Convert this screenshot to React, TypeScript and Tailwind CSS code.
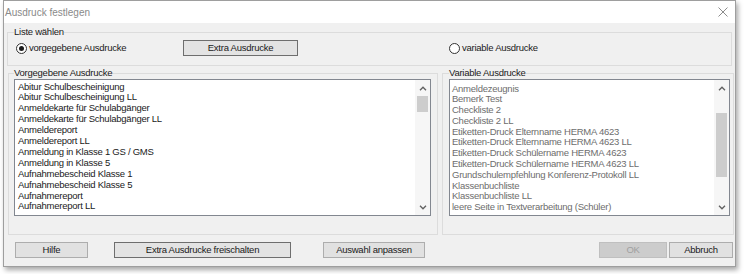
import React from "react";

const leftItems = [
  "Abitur Schulbescheinigung",
  "Abitur Schulbescheinigung LL",
  "Anmeldekarte für Schulabgänger",
  "Anmeldekarte für Schulabgänger LL",
  "Anmeldereport",
  "Anmeldereport LL",
  "Anmeldung in Klasse 1 GS / GMS",
  "Anmeldung in Klasse 5",
  "Aufnahmebescheid Klasse 1",
  "Aufnahmebescheid Klasse 5",
  "Aufnahmereport",
  "Aufnahmereport LL",
];

const rightItems = [
  "Anmeldezeugnis",
  "Bemerk Test",
  "Checkliste 2",
  "Checkliste 2 LL",
  "Etiketten-Druck Elternname HERMA 4623",
  "Etiketten-Druck Elternname HERMA 4623 LL",
  "Etiketten-Druck Schülername HERMA 4623",
  "Etiketten-Druck Schülername HERMA 4623 LL",
  "Grundschulempfehlung Konferenz-Protokoll LL",
  "Klassenbuchliste",
  "Klassenbuchliste LL",
  "leere Seite in Textverarbeitung (Schüler)",
];

function Chevron({ up }: { up: boolean }) {
  return (
    <svg width="8" height="5" viewBox="0 0 8 5">
      <path
        d={up ? "M1 4.2 L4 1.2 L7 4.2" : "M1 0.8 L4 3.8 L7 0.8"}
        fill="none"
        stroke="#606060"
        strokeWidth="1.3"
      />
    </svg>
  );
}

function ScrollBar({ thumbTop, thumbHeight }: { thumbTop: string; thumbHeight: string }) {
  return (
    <div className="flex w-[15px] shrink-0 flex-col bg-[#f6f6f6]">
      <div className="flex h-[16px] items-center justify-center">
        <Chevron up />
      </div>
      <div className="flex-1 px-[2px]">
        <div className={`${thumbTop} ${thumbHeight} w-full bg-[#cdcdcd]`} />
      </div>
      <div className="flex h-[16px] items-center justify-center">
        <Chevron up={false} />
      </div>
    </div>
  );
}

function Radio({ checked }: { checked: boolean }) {
  return (
    <div className="flex h-[11px] w-[11px] items-center justify-center rounded-full border border-[#333333] bg-white">
      {checked && <div className="h-[5px] w-[5px] rounded-full bg-[#1a1a1a]" />}
    </div>
  );
}

export default function App() {
  return (
    <div className="h-[274px] w-[745px] bg-white pl-[3px] font-['Liberation_Sans',Arial,sans-serif] text-[9.5px] tracking-[-0.25px] text-[#1a1a1a]">
      <div className="flex h-[267px] w-[733px] flex-col border border-[#9e9e9e] bg-[#f0f0f0] shadow-[2px_3px_5px_rgba(0,0,0,0.35)]">
        {/* Title bar */}
        <div className="flex h-[22px] shrink-0 items-center justify-between bg-white pl-[1px] pr-[7px]">
          <span className="text-[10px] tracking-[0px] text-[#8a8a8a]">Ausdruck festlegen</span>
          <svg width="10" height="10" viewBox="0 0 10 10">
            <path d="M0.5 0.5 L9.5 9.5 M9.5 0.5 L0.5 9.5" stroke="#8c8c8c" strokeWidth="1" fill="none" />
          </svg>
        </div>

        {/* Body */}
        <div className="flex flex-1 flex-col">
          {/* Liste wählen */}
          <fieldset className="mx-[3px] mt-[3px] min-w-0 border border-[#dcdcdc] pb-[9px] pl-[6px]">
            <legend className="px-0 leading-[12px]">Liste wählen</legend>
            <div className="mt-[2px] flex h-[16px] items-center">
              <div className="flex w-[169px] items-center pl-[2px]">
                <Radio checked />
                <span className="ml-[2px]">vorgegebene Ausdrucke</span>
              </div>
              <div className="flex h-[16px] w-[115px] items-center justify-center border border-[#6e6e6e] bg-[#e3e3e3]">
                Extra Ausdrucke
              </div>
              <div className="ml-[151px] flex items-center">
                <Radio checked={false} />
                <span className="ml-[2px]">variable Ausdrucke</span>
              </div>
            </div>
          </fieldset>

          {/* Lists */}
          <div className="mt-[1px] flex gap-[4px] pl-[4px]">
            <fieldset className="w-[430px] min-w-0 border border-[#dcdcdc] pb-[18px] pl-[5px] pr-[6px]">
              <legend className="leading-[12px]">Vorgegebene Ausdrucke</legend>
              <div className="flex h-[137px] border border-[#828790] bg-white">
                <div className="flex-1 overflow-hidden pl-[3px] pt-[1.5px] leading-[10.9px] whitespace-nowrap">
                  {leftItems.map((t) => (
                    <div key={t}>{t}</div>
                  ))}
                </div>
                <ScrollBar thumbTop="mt-0" thumbHeight="h-[16px]" />
              </div>
            </fieldset>

            <fieldset className="w-[292px] min-w-0 border border-[#dcdcdc] pb-[18px] pl-[6px] pr-[3px]">
              <legend className="leading-[12px]">Variable Ausdrucke</legend>
              <div className="flex h-[137px] border border-[#828790] bg-white">
                <div className="flex-1 overflow-hidden pl-[2px] pt-[3.5px] leading-[10.8px] whitespace-nowrap text-[#6d6d6d]">
                  {rightItems.map((t) => (
                    <div key={t}>{t}</div>
                  ))}
                </div>
                <ScrollBar thumbTop="mt-[17px]" thumbHeight="h-[64px]" />
              </div>
            </fieldset>
          </div>

          {/* Buttons */}
          <div className="mt-[7px] flex h-[16px] items-stretch pl-[11px] pr-[2px]">
            <div className="flex w-[73px] items-center justify-center border border-[#adadad] bg-[#e1e1e1]">Hilfe</div>
            <div className="ml-[26px] flex w-[177px] items-center justify-center border border-[#6e6e6e] bg-[#e3e3e3]">
              Extra Ausdrucke freischalten
            </div>
            <div className="ml-[32px] flex w-[102px] items-center justify-center border border-[#adadad] bg-[#e1e1e1]">
              Auswahl anpassen
            </div>
            <div className="ml-auto flex w-[68px] items-center justify-center border border-[#bfbfbf] bg-[#cccccc] text-[#a0a0a0]">
              OK
            </div>
            <div className="ml-[2px] flex w-[64px] items-center justify-center border border-[#adadad] bg-[#e1e1e1]">
              Abbruch
            </div>
          </div>
        </div>
      </div>
    </div>
  );
}
